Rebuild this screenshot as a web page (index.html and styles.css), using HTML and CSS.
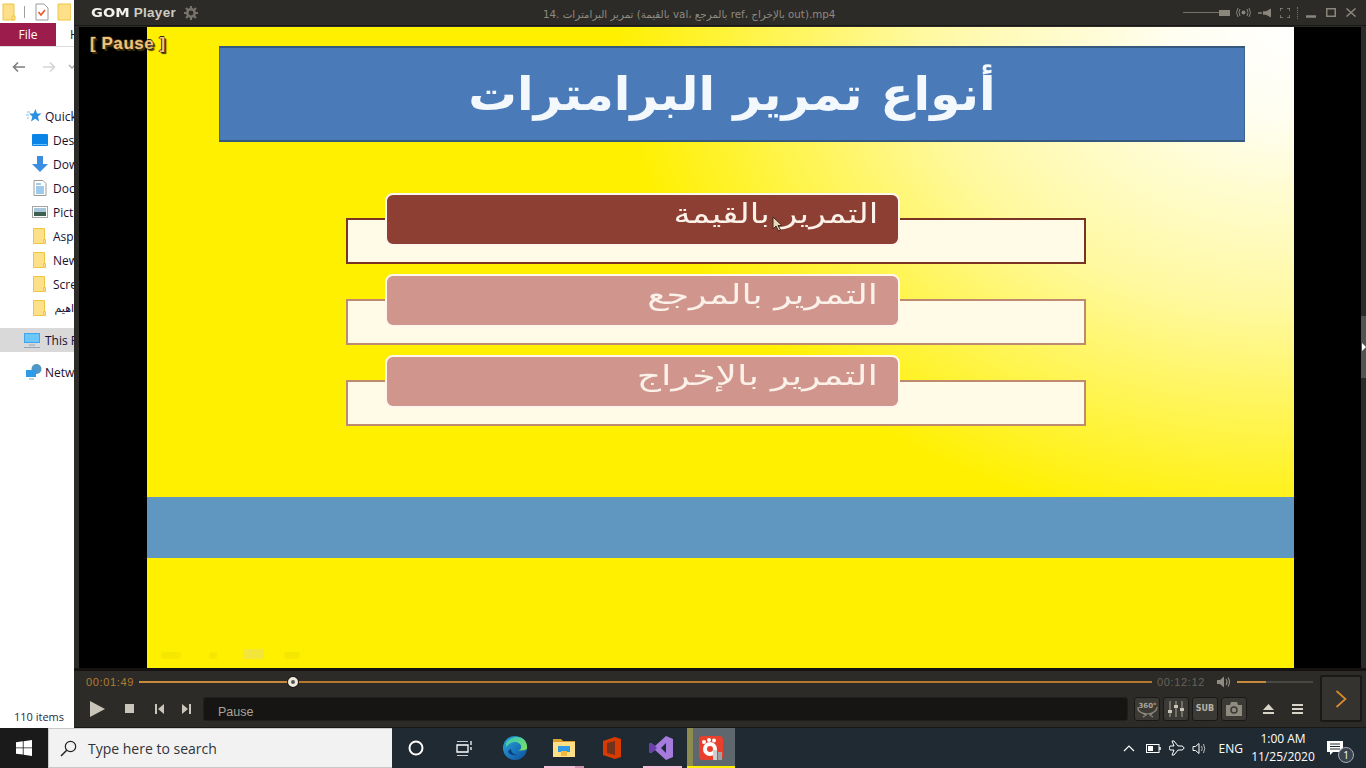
FILE: index.html
```html
<!DOCTYPE html>
<html lang="en">
<head>
<meta charset="utf-8">
<title>GOM Player</title>
<link rel="stylesheet" href="styles.css">
</head>
<body>
<div class="desktop">
  <div class="screen">
    <section class="explorer">
      <div class="qat">
        <svg class="qat-ic" width="14" height="18" viewBox="0 0 14 18"><path d="M1 1h11v16H1z" fill="#ffe08a" stroke="#eec643"/><path d="M10 13h3v4h-3z" fill="#ffe08a" stroke="#eec643"/></svg>
        <span class="qat-sep"></span>
        <svg class="qat-ic" width="14" height="18" viewBox="0 0 14 18"><path d="M1 1h8l4 4v12H1z" fill="#fff" stroke="#9a9a9a"/><path d="M3.500 9l2.500 3 4-5" fill="none" stroke="#e8552a" stroke-width="1.600"/></svg>
        <svg class="qat-ic qat-last" width="14" height="18" viewBox="0 0 14 18"><path d="M1 1h13v16H1z" fill="#ffe08a" stroke="#eec643"/></svg>
      </div>
      <div class="tabs"><span class="tab-file">File</span><span class="tab-h">H</span></div>
      <div class="navrow">
        <svg width="14" height="12" viewBox="0 0 14 12"><path d="M13 6H2M6 1.500L1.500 6 6 10.500" fill="none" stroke="#7d7d7d" stroke-width="1.600"/></svg>
        <svg width="14" height="12" viewBox="0 0 14 12"><path d="M1 6h11M8 1.500L12.500 6 8 10.500" fill="none" stroke="#d4d4d4" stroke-width="1.600"/></svg>
        <svg class="nav-chev" width="8" height="6" viewBox="0 0 8 6"><path d="M1 1l3 3 3-3" fill="none" stroke="#aaa" stroke-width="1.300"/></svg>
      </div>
      <ul class="tree">
        <li class="row row-root">
          <svg width="16" height="16" viewBox="0 0 16 16"><path d="M9.500 1l1.500 4.500h4.500l-3.600 3 1.300 5-4-2.800L5 13.500l1.400-5L3 5.500h4.500z" fill="#2b90e0"/><path d="M1 4h3M0 7h3M1 10h2" stroke="#7cc0f2"/></svg>
          <span>Quick</span>
        </li>
        <li class="row">
          <svg width="16" height="12" viewBox="0 0 16 12"><rect width="16" height="12" rx="1" fill="#0a84e6"/><path d="M1 10.500h14" stroke="#6fc0f8"/></svg>
          <span>Desk</span>
        </li>
        <li class="row">
          <svg width="16" height="16" viewBox="0 0 16 16"><path d="M5 0h6v8h5l-8 8-8-8h5z" fill="#3a8de0"/></svg>
          <span>Dow</span>
        </li>
        <li class="row">
          <svg width="16" height="16" viewBox="0 0 16 16"><path d="M2 .5h9l3 3v12H2z" fill="#fff" stroke="#9a9a9a"/><path d="M4 4h5M4 7h8M4 9h8M4 11h8M4 13h8" stroke="#3c94d8"/></svg>
          <span>Doc</span>
        </li>
        <li class="row">
          <svg width="16" height="12" viewBox="0 0 16 12"><rect x=".5" y=".5" width="15" height="11" fill="#fff" stroke="#a5a5a5"/><rect x="2" y="2" width="12" height="4" fill="#a8c6dc"/><rect x="2" y="6" width="12" height="4" fill="#3f5f50"/></svg>
          <span>Pict</span>
        </li>
        <li class="row">
          <svg width="16" height="16" viewBox="0 0 16 16"><path d="M1.500.5h11v15h-11z" fill="#ffe08a" stroke="#eec643"/><path d="M11.500 11.500h2v4h-2z" fill="#ffe08a" stroke="#eec643"/></svg>
          <span>Asp</span>
        </li>
        <li class="row">
          <svg width="16" height="16" viewBox="0 0 16 16"><path d="M1.500.5h11v15h-11z" fill="#ffe08a" stroke="#eec643"/><path d="M11.500 11.500h2v4h-2z" fill="#ffe08a" stroke="#eec643"/></svg>
          <span>New</span>
        </li>
        <li class="row">
          <svg width="16" height="16" viewBox="0 0 16 16"><path d="M1.500.5h11v15h-11z" fill="#ffe08a" stroke="#eec643"/><path d="M11.500 11.500h2v4h-2z" fill="#ffe08a" stroke="#eec643"/></svg>
          <span>Scre</span>
        </li>
        <li class="row">
          <svg width="16" height="16" viewBox="0 0 16 16"><path d="M1.500.5h11v15h-11z" fill="#ffe08a" stroke="#eec643"/><path d="M11.500 11.500h2v4h-2z" fill="#ffe08a" stroke="#eec643"/></svg>
          <span class="row-ar" dir="rtl">اهيم</span>
        </li>
        <li class="row row-root row-sel">
          <svg width="16" height="15" viewBox="0 0 16 15"><rect width="16" height="10" fill="#3ea6ee"/><rect x="1" y="1" width="14" height="8" fill="#6cc6f8"/><path d="M5 12h6M0 14.500h16" stroke="#8ea4b8"/></svg>
          <span>This P</span>
        </li>
        <li class="row row-root row-net">
          <svg width="16" height="16" viewBox="0 0 16 16"><circle cx="10.500" cy="5" r="5" fill="#4f97c4"/><rect x="0" y="6" width="10" height="7" fill="#2f9be8"/><path d="M3 15h5" stroke="#8ea4b8"/></svg>
          <span>Netw</span>
        </li>
      </ul>
      <div class="status">110 items</div>
    </section>

    <section class="gom">
      <header class="gom-title">
        <div class="gom-brand">
          <span class="gom-logo">GOM</span>
          <span class="gom-player">Player</span>
          <svg width="14" height="14" viewBox="0 0 14 14"><circle cx="7" cy="7" r="3.700" fill="none" stroke="#77736a" stroke-width="2.600"/><path d="M7 0v3M7 11v3M0 7h3M11 7h3M2 2l2 2M10 10l2 2M12 2l-2 2M4 10l-2 2" stroke="#77736a" stroke-width="2.200"/></svg>
        </div>
        <div class="gom-file" dir="ltr">14. تمرير البرامترات (بالقيمة val، بالمرجع ref، بالإخراج out).mp4</div>
        <div class="gom-win">
          <span class="mini-track"></span><span class="mini-thumb"></span>
          <svg class="w-radio" width="15" height="11" viewBox="0 0 15 11"><circle cx="7.500" cy="5.500" r="2" fill="#8a867c"/><path d="M4 2Q2 5.500 4 9M11 2Q13 5.500 11 9M2 1Q-1 5.500 2 10M13 1Q16 5.500 13 10" fill="none" stroke="#8a867c"/></svg>
          <svg class="w-pin" width="14" height="10" viewBox="0 0 14 10"><path d="M0 5h4" stroke="#8a867c" stroke-width="1.500"/><path d="M5 3h3l5-3v10L8 7H5z" fill="#8a867c" transform="matrix(1 0 0 .9 0 .5)"/></svg>
          <svg class="w-full" width="10" height="10" viewBox="0 0 10 10"><path d="M0 3V0h3M7 0h3v3M10 7v3H7M3 10H0V7" fill="none" stroke="#8a867c" stroke-width="1.500"/></svg>
          <span class="win-sep"></span>
          <svg class="w-min" width="10" height="10" viewBox="0 0 10 10"><path d="M0 8.500h10" stroke="#8a867c" stroke-width="2.500"/></svg>
          <svg class="w-max" width="10" height="9" viewBox="0 0 10 9"><rect x=".75" y=".75" width="8.500" height="7.500" fill="none" stroke="#8a867c" stroke-width="1.500"/></svg>
          <svg class="w-close" width="10" height="9" viewBox="0 0 10 9"><path d="M.5.500l9 8M9.500.500l-9 8" stroke="#8a867c" stroke-width="1.500"/></svg>
        </div>
      </header>

      <div class="gom-stage">
        <div class="osd">[ Pause ]</div>
        <div class="slide">
          <h1 class="slide-title" dir="rtl"><span>أنواع تمرير البرامترات</span></h1>
          <div class="slide-list">
            <div class="item item-on">
              <div class="pill" dir="rtl"><span>التمرير بالقيمة</span></div>
              <div class="box"></div>
            </div>
            <div class="item item-two">
              <div class="pill" dir="rtl"><span>التمرير بالمرجع</span></div>
              <div class="box"></div>
            </div>
            <div class="item item-three">
              <div class="pill" dir="rtl"><span>التمرير بالإخراج</span></div>
              <div class="box"></div>
            </div>
          </div>
          <div class="band"></div>
          <div class="slide-foot"><i class="smudge s1"></i><i class="smudge s2"></i><i class="smudge s3"></i><i class="smudge s4"></i></div>
          <svg class="cursor" width="12" height="16" viewBox="0 0 12 16"><path d="M1 1v12l3-3 2.500 5 2-1-2.500-4.500h4z" fill="#e8d8b8" stroke="#3a2a20" stroke-width="1"/></svg>
        </div>
      </div>

      <footer class="gom-ctrl">
        <div class="ctrl-main">
          <div class="seek-row">
            <span class="time time-now">00:01:49</span>
            <div class="seek"><span class="seek-fill"></span><span class="seek-knob"></span></div>
            <span class="time time-end">00:12:12</span>
            <svg class="vol-ic" width="14" height="12" viewBox="0 0 14 12"><path d="M0 4h3l4-3.500v11L3 8H0z" fill="#8f8b80"/><path d="M9 3q2 3 0 6M11 1.500q3 4.500 0 9" fill="none" stroke="#8f8b80" stroke-width="1.200"/></svg>
            <div class="vol"><span class="vol-fill"></span></div>
          </div>
          <div class="btn-row">
            <svg class="b-play" width="15" height="16" viewBox="0 0 15 16"><path d="M0 0l15 8-15 8z" fill="#c9c5b8"/></svg>
            <svg class="b-stop" width="9" height="9" viewBox="0 0 9 9"><rect width="9" height="9" fill="#c9c5b8"/></svg>
            <svg class="b-prev" width="9" height="10" viewBox="0 0 9 10"><path d="M0 0h2v10H0zM9 0v10L3 5z" fill="#c9c5b8"/></svg>
            <svg class="b-next" width="9" height="10" viewBox="0 0 9 10"><path d="M9 0H7v10h2zM0 0v10l6-5z" fill="#c9c5b8"/></svg>
            <div class="status-box">Pause</div>
            <div class="sq sq-first"><svg width="23" height="20" viewBox="0 0 23 20"><text class="t360" x="11.500" y="9" text-anchor="middle">360°</text><path d="M2 8q-1 6 9 7 10-1 10-7M6 14l4 2-3 2M17 14l-3 2 3 2" fill="none" stroke="#8f8b80" stroke-width="1.200"/></svg></div>
            <div class="sq"><svg width="18" height="18" viewBox="0 0 18 18"><path d="M3 1v16M9 1v16M15 1v16" stroke="#a8a498"/><path d="M1 10h4v3H1zM7 5h4v3H7zM13 8h4v3h-4z" fill="#c9c5b8"/></svg></div>
            <div class="sq sq-sub">SUB</div>
            <div class="sq"><svg width="16" height="14" viewBox="0 0 16 14"><path d="M0 3h4l1-3h6l1 3h4v11H0z" fill="#8f8b80"/><circle cx="8" cy="8" r="3" fill="none" stroke="#3c3a35" stroke-width="1.500"/></svg></div>
            <svg class="b-eject" width="11" height="10" viewBox="0 0 11 10"><path d="M5.500 0L11 6H0zM0 8h11v2H0z" fill="#d8d4c8"/></svg>
            <svg class="b-menu" width="11" height="10" viewBox="0 0 11 10"><path d="M0 0h11v2H0zM0 4h11v2H0zM0 8h11v2H0z" fill="#d8d4c8"/></svg>
          </div>
        </div>
        <div class="next-panel"><svg width="12" height="18" viewBox="0 0 12 18"><path d="M1.500 1l9 8-9 8" fill="none" stroke="#d98a2e" stroke-width="1.700"/></svg></div>
      </footer>
      <div class="edge-handle"><svg width="4" height="8" viewBox="0 0 4 8"><path d="M0 0l4 4-4 4z" fill="#fff"/></svg></div>
    </section>
  </div>

  <nav class="taskbar">
    <div class="start"><svg width="16" height="16" viewBox="0 0 16 16"><path d="M0 2.300L6.800 1.300V7.500H0zM7.600 1.200L16 0V7.500H7.600zM0 8.300H6.800V14.600L0 13.700zM7.600 8.300H16V16L7.600 14.800z" fill="#fff"/></svg></div>
    <div class="search">
      <svg width="17" height="17" viewBox="0 0 17 17"><circle cx="10.500" cy="6.500" r="5.200" fill="none" stroke="#222" stroke-width="1.200"/><path d="M6.700 10.300L1 16" stroke="#222" stroke-width="1.500"/></svg>
      <span>Type here to search</span>
    </div>
    <div class="tasks">
      <div class="task"><svg width="16" height="16" viewBox="0 0 16 16"><circle cx="8" cy="8" r="6.500" fill="none" stroke="#fff" stroke-width="2"/></svg></div>
      <div class="task"><svg width="17" height="15" viewBox="0 0 17 15"><path d="M1 0h11M1 15h11M1 4h11v7H1zM15 0v4M15 6v3" fill="none" stroke="#fff" stroke-width="1.300"/></svg></div>
      <div class="task task-edge"><svg width="26" height="24" viewBox="0 0 26 24"><defs><linearGradient id="eg" x1="0" y1="0" x2="1" y2="1"><stop offset="0" stop-color="#2aa8e0"/><stop offset="1" stop-color="#0d4f9c"/></linearGradient><linearGradient id="eg2" x1="0" y1="0" x2="1" y2="1"><stop offset="0" stop-color="#36c6c0"/><stop offset="1" stop-color="#7ee05a"/></linearGradient></defs><circle cx="13" cy="12" r="12" fill="url(#eg)"/><path d="M4 7Q10-1 19 1.500 26 5 25 13q-3 2-9 1.500 4-1 3-5-2-4-7-3.500Q7 7 4 11z" fill="url(#eg2)"/><path d="M9 13q0 5 6 6-6 1-9-3 1-3 3-3z" fill="#0b3f80"/></svg></div>
      <div class="task task-run"><svg width="22" height="18" viewBox="0 0 22 18"><path d="M0 0h8l2 2h12v16H0z" fill="#d9a02c"/><path d="M0 3h22v15H0z" fill="#ffdf85"/><rect x="5" y="7" width="12" height="6" fill="#2f9be8"/><rect x="8" y="12" width="6" height="5" fill="#f0b93a"/></svg></div>
      <div class="task"><svg width="18" height="22" viewBox="0 0 18 22"><path d="M0 4L12 0l6 2v18l-6 2-12-4z" fill="#d83b01"/><path d="M4 6l8-2v14l-8-2zM12 4v14" fill="#1f2a33" opacity=".55"/></svg></div>
      <div class="task task-run-2"><svg width="24" height="24" viewBox="0 0 24 24"><path d="M17 0l7 3v18l-7 3L6 14l-4 3-2-1V8l2-1 4 3zM17 7l-5 5 5 5z" fill="#a67bde" fill-rule="evenodd"/><path d="M0 8l2-1 4 3 2 2-2 2-4 3-2-1z" fill="#6a3fa8"/></svg></div>
      <div class="task task-active"><svg width="24" height="24" viewBox="0 0 24 24"><rect width="24" height="24" rx="4" fill="#e8402c"/><circle cx="11" cy="13" r="7" fill="#fff"/><circle cx="11" cy="13" r="3" fill="#e8402c"/><circle cx="5" cy="6" r="2" fill="#fff"/><circle cx="10" cy="4" r="2" fill="#fff"/><circle cx="15" cy="4.500" r="2" fill="#fff"/><rect x="14" y="14" width="4" height="10" fill="#d0d0d0"/><rect x="19" y="16" width="4" height="8" fill="#a0a0a0"/></svg></div>
    </div>
    <div class="tray">
      <svg class="t-chev" width="12" height="7" viewBox="0 0 12 7"><path d="M1 6l5-5 5 5" fill="none" stroke="#fff" stroke-width="1.200"/></svg>
      <svg class="t-batt" width="15" height="9" viewBox="0 0 15 9"><rect x=".5" y=".5" width="12.500" height="8" fill="none" stroke="#fff"/><rect x="2" y="2" width="5" height="5" fill="#fff"/><path d="M14 3v3" stroke="#fff" stroke-width="1.500"/></svg>
      <svg class="t-plane" width="16" height="16" viewBox="0 0 16 16"><path d="M1 6h4L3 1h2l4 5h4q2 1 2 2t-2 2H9l-4 5H3l2-5H1L0 8z" fill="none" stroke="#fff"/></svg>
      <svg class="t-vol" width="16" height="13" viewBox="0 0 16 13"><path d="M1 4.500h2.500L7 1.500v10L3.500 8.500H1z" fill="none" stroke="#fff"/><path d="M9.500 4q1.500 2.500 0 5M11.500 2q2.500 4.500 0 9" fill="none" stroke="#bbb"/></svg>
      <span class="t-lang">ENG</span>
      <div class="clock"><span>1:00 AM</span><span>11/25/2020</span></div>
      <div class="notif">
        <svg width="16" height="15" viewBox="0 0 16 15"><path d="M0 0h16v11H6l-3 3v-3H0z" fill="#fff"/><path d="M3 3h10M3 5.500h10M3 8h10" stroke="#1f2a33"/></svg>
        <span class="notif-badge">1</span>
      </div>
    </div>
  </nav>
</div>
</body>
</html>
```

FILE: styles.css
```css
* { box-sizing: border-box; }
html, body { margin: 0; padding: 0; height: 100%; overflow: hidden; }
body { font-family: "Open Sans", "Noto Sans", "DejaVu Sans", sans-serif; background: #000; }
svg { display: block; flex: none; }

.desktop { width: 1366px; height: 768px; display: flex; flex-direction: column; }
.screen { position: relative; height: 728px; flex: none; background: #fff; }

/* Explorer window (behind the player) */
.explorer { position: absolute; left: 0; top: 0; width: 74px; height: 728px; background: #fff; overflow: hidden; display: flex; flex-direction: column; color: #1b1030; font-size: 12px; }
.qat { height: 23px; display: flex; align-items: center; padding: 0 0 0 2px; flex: none; }
.qat-sep { width: 1px; height: 12px; background: #a0a0a0; margin: 0 10px 0 8px; flex: none; }
.qat-last { margin-left: 8px; }
.tabs { height: 24px; display: flex; align-items: center; border-bottom: 1px solid #dcdcdc; flex: none; }
.tab-file { width: 56px; height: 23px; background: #9c1c4c; color: #fff; display: flex; align-items: center; justify-content: center; font-size: 12px; flex: none; }
.tab-h { margin-left: 14px; color: #222; }
.navrow { height: 57px; display: flex; align-items: flex-start; padding: 14px 0 0 12px; gap: 16px; flex: none; }
.nav-chev { margin: 3px 0 0 -4px; }
.tree { list-style: none; margin: 0; padding: 0; flex: 1; min-height: 0; }
.row { height: 24px; display: flex; align-items: center; padding-left: 32px; gap: 5px; white-space: nowrap; }
.row-root { padding-left: 26px; gap: 3px; }
.row-ar { font-family: "DejaVu Sans", sans-serif; font-size: 11px; width: 30px; }
.row-sel { background: #d9d9d9; padding-left: 24px; gap: 5px; margin-top: 8px; }
.row-net { margin-top: 8px; padding-left: 26px; }
.status { height: 22px; flex: none; padding: 3px 0 0 14px; font-size: 11px; color: #1f2a44; line-height: 16px; white-space: nowrap; }

/* GOM Player window */
.gom { position: absolute; left: 74px; top: 0; width: 1292px; height: 728px; background: #2c2b28; display: flex; flex-direction: column; }
.gom-title { height: 26px; flex: none; display: flex; align-items: center; border-bottom: 1px solid #191817; position: relative; }
.gom-brand { display: flex; align-items: center; padding-left: 17px; width: 440px; flex: none; }
.gom-logo { font-family: "DejaVu Sans", sans-serif; font-weight: 700; font-size: 14.500px; color: #f4f2ec; transform: scaleY(.8); }
.gom-player { font-family: "Liberation Sans", sans-serif; font-size: 13.500px; font-weight: 700; color: #cfcbc0; margin: 0 8px 0 4px; letter-spacing: .3px; }
.gom-file { font-family: "DejaVu Sans", "Liberation Sans", sans-serif; font-size: 10.300px; color: #8d8a80; white-space: nowrap; width: 560px; flex: none; padding: 3px 0 0 29px; }
.gom-win { display: flex; align-items: center; margin-left: auto; padding-right: 10px; height: 100%; }
.mini-track { width: 36px; height: 1px; background: #77736a; }
.mini-thumb { width: 11px; height: 6px; background: #8a867c; }
.w-radio { margin-left: 6px; }
.w-pin { margin-left: 7px; }
.w-full { margin-left: 8px; }
.win-sep { width: 1px; height: 12px; border-left: 1px dotted #77736a; margin-left: 7px; }
.w-min { margin-left: 8px; }
.w-max { margin-left: 10px; }
.w-close { margin-left: 10px; }

.gom-stage { flex: 1; background: #000; margin: 1px 5px 0 5px; padding-left: 68px; padding-right: 67px; position: relative; min-height: 0; display: flex; }
.osd { position: absolute; left: 11px; top: 7px; font-family: "Liberation Sans", sans-serif; font-weight: 700; font-size: 17px; color: #f2c27c; text-shadow: 1px 1px 0 #3a2c10, -1px 0 0 #3a2c10, 0 -1px 0 #3a2c10, 2px 2px 1px #40360c; z-index: 3; white-space: nowrap; letter-spacing: .55px; }
.slide { flex: 1; background: #fff000; display: flex; flex-direction: column; padding-top: 19px; position: relative; background-image: radial-gradient(ellipse 680px 510px at 100% 0, #fff 0, #fffef0 18%, #fff9a0 55%, #fff000 100%); min-width: 0; }
.slide-title { margin: 0 49px 0 72px; height: 96px; background: #4a7ab8; border: 1px solid #3c6590; border-top: 2px solid #35597e; border-bottom: 2px solid #35597e; color: #f2f8fc; font-family: "DejaVu Sans", sans-serif; font-weight: 700; font-size: 46px; line-height: 92px; text-align: center; flex: none; }
.slide-title span { display: inline-block; word-spacing: 1px; transform: scaleX(1.055); filter: blur(.4px); }
.slide-list { margin: 51px 0 0 199px; width: 740px; display: flex; flex-direction: column; gap: 10px; flex: none; }
.item { height: 71px; display: flex; flex-direction: column; }
.pill { position: relative; z-index: 1; margin-left: 39px; width: 515px; height: 53px; background: #d0958c; border: 2px solid #fff6ec; border-radius: 8px; color: #fbf1e8; font-family: "DejaVu Sans", sans-serif; font-size: 27px; line-height: 38px; padding-right: 20px; flex: none; }
.pill span { display: inline-block; transform: scaleX(1.27); transform-origin: right center; filter: blur(.3px); }
.item-two .pill span { transform: scaleX(1.35); }
.item-three .pill span { transform: scaleX(1.395); }
.box { margin-top: -28px; height: 46px; background: #fffbe6; border: 2px solid #c08a70; flex: none; }
.item-on .pill { background: #8e3f34; }
.item-on .box { border-color: #7a3424; }
.band { margin-top: 71px; height: 61px; background: #6097c1; flex: none; }
.slide-foot { flex: 1; background: #fff000; display: flex; align-items: flex-end; padding: 0 0 9px 14px; }
.smudge { display: block; height: 7px; background: #f4e500; opacity: .8; border-radius: 3px; flex: none; }
.s1 { width: 20px; }
.s2 { width: 8px; margin-left: 28px; }
.s3 { width: 21px; height: 10px; margin-left: 26px; background: #efe24a; }
.s4 { width: 16px; margin-left: 20px; }
.cursor { position: absolute; left: 625px; top: 189px; z-index: 2; }

.gom-ctrl { height: 60px; flex: none; display: flex; border-top: 3px solid #141312; background: #2c2b28; border-bottom: 1px solid #191817; padding-left: 12px; }
.ctrl-main { width: 1226px; flex: none; display: flex; flex-direction: column; }
.seek-row { height: 22px; display: flex; align-items: center; flex: none; }
.time { font-family: "Liberation Sans", sans-serif; font-size: 11px; letter-spacing: .65px; white-space: nowrap; }
.time-now { color: #b37c32; width: 53px; flex: none; }
.time-end { color: #66635a; width: 60px; flex: none; margin-left: 5px; }
.seek { width: 1013px; height: 2px; background: #b5772c; position: relative; flex: none; }
.seek-fill { position: absolute; left: 0; top: 0; height: 2px; width: 154px; background: #c88a3a; }
.seek-knob { position: absolute; left: 149px; top: -4px; width: 10px; height: 10px; border-radius: 50%; background: #efeadc; border: 3px solid #efeadc; box-shadow: 0 0 0 1px #1a1a18; }
.seek-knob::after { content: ""; display: block; width: 4px; height: 4px; border-radius: 50%; background: #555; }
.vol-ic { flex: none; }
.vol { width: 76px; height: 2px; margin-left: 6px; background: #4a4842; position: relative; flex: none; }
.vol-fill { display: block; width: 29px; height: 2px; background: #c88a3a; }
.btn-row { flex: 1; display: flex; align-items: center; padding-left: 4px; padding-bottom: 3px; }
.b-stop { margin-left: 20px; }
.b-prev { margin-left: 21px; }
.b-next { margin-left: 18px; }
.status-box { width: 925px; height: 24px; margin-left: 12px; background: #161513; border: 1px solid #201f1d; border-radius: 3px; color: #a8a498; font-family: "Liberation Sans", sans-serif; font-size: 12.500px; line-height: 28px; padding-left: 14px; flex: none; }
.sq { width: 26px; height: 24px; margin-left: 3px; background: #3c3a35; border: 1px solid #1a1917; border-radius: 3px; display: flex; align-items: center; justify-content: center; flex: none; }
.sq-first { margin-left: 6px; }
.sq-sub { font-family: "DejaVu Sans", sans-serif; font-weight: 700; font-size: 8px; color: #b8b4a8; }
.t360 { font-family: "DejaVu Sans", sans-serif; font-weight: 700; font-size: 7px; fill: #a8a498; }
.b-eject { margin-left: 16px; }
.b-menu { margin-left: 18px; }
.next-panel { width: 42px; height: 47px; margin: 4px 0 0 8px; background: #35332f; border: 2px solid #1a1917; display: flex; align-items: center; justify-content: center; flex: none; border-radius: 2px; }
.edge-handle { position: absolute; right: 0; top: 316px; width: 5px; height: 62px; background: #55534e; display: flex; align-items: center; justify-content: center; }

/* Taskbar */
.taskbar { height: 40px; flex: none; background: #1f2a33; display: flex; align-items: stretch; color: #fff; }
.start { width: 48px; background: #1a1a1a; display: flex; align-items: center; justify-content: center; flex: none; }
.search { width: 344px; background: #f2f2f2; border: 1px solid #c8c8c8; border-width: 1px 0 1px 1px; display: flex; align-items: center; padding-left: 11px; gap: 11px; color: #30343a; font-family: "Open Sans", sans-serif; font-size: 14px; flex: none; }
.tasks { display: flex; flex: none; }
.task { width: 48.500px; display: flex; align-items: center; justify-content: center; flex: none; position: relative; }
.task-edge { margin-left: 2px; }
.task-run::after, .task-run-2::after { content: ""; position: absolute; bottom: 0; height: 2px; background: #f6bdd6; }
.task-run::after { left: 4px; right: 4px; background: linear-gradient(90deg, #f6bdd6 0 78%, #c893ab 78%); }
.task-run-2::after { left: 6px; right: 3px; }
.task-active { background: #5e676d; border-left: 6px solid #8c8c4e; width: 48px; padding-right: 6px; margin-left: 2px; }
.task-active::after { content: ""; position: absolute; left: -6px; right: 0; bottom: 0; height: 2px; background: #fff000; }
.tray { margin-left: auto; display: flex; align-items: center; flex: none; }
.t-batt { margin-left: 11px; }
.t-plane { margin-left: 8px; }
.t-vol { margin-left: 7px; }
.t-lang { font-family: "Open Sans", sans-serif; font-size: 12px; margin-left: 11px; }
.clock { width: 70px; margin-left: 5px; display: flex; flex-direction: column; align-items: center; font-family: "Open Sans", sans-serif; font-size: 12px; line-height: 18px; }
.notif { position: relative; width: 48px; display: flex; justify-content: center; padding-right: 14px; }
.notif-badge { position: absolute; left: 20px; top: 6px; width: 16px; height: 16px; border-radius: 50%; background: #3a444c; border: 1px solid #aab; color: #fff; font-size: 10px; line-height: 14px; text-align: center; }
```
